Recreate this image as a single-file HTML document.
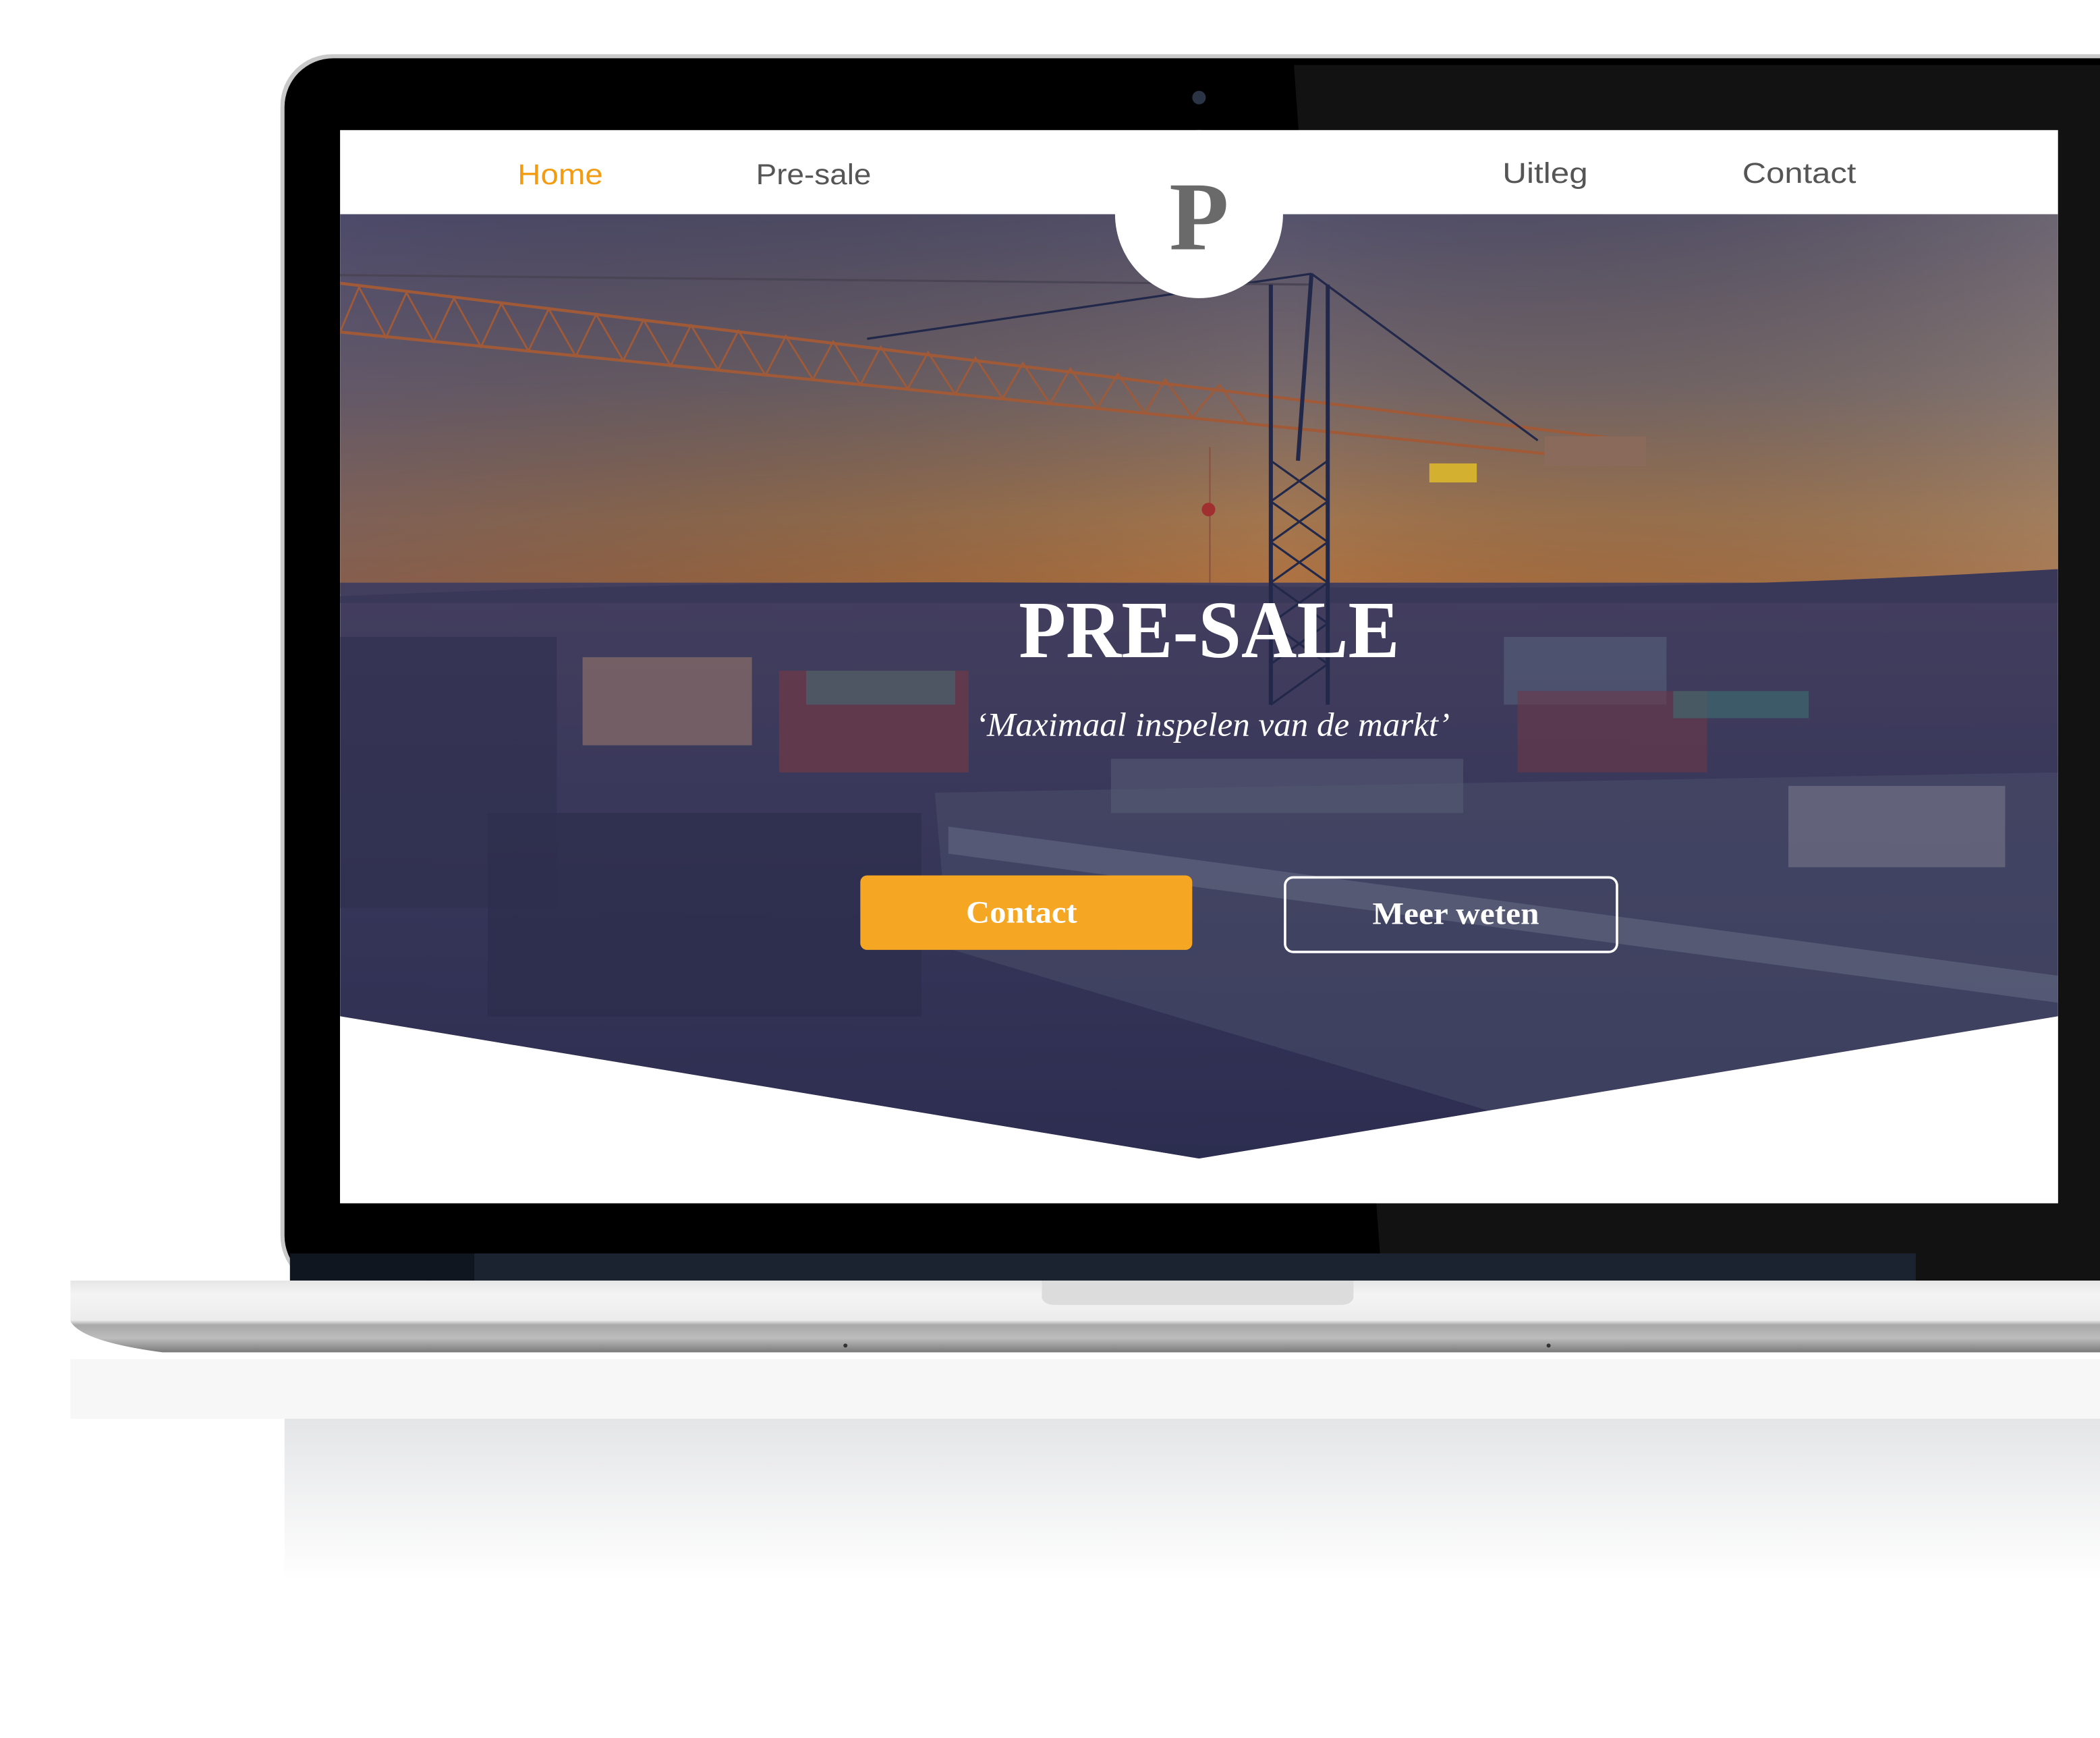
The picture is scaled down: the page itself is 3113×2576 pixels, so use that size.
<!DOCTYPE html>
<html><head><meta charset="utf-8"><style>
html,body{margin:0;padding:0;background:#fff;}
body{width:3113px;height:2576px;overflow:hidden;}
svg{display:block}
</style></head><body>
<svg width="3113" height="2576" viewBox="0 0 1550 1282.6" xmlns="http://www.w3.org/2000/svg">
<defs>
<linearGradient id="sky" x1="0" y1="0" x2="0" y2="1">
<stop offset="0" stop-color="#55526c"/>
<stop offset="0.45" stop-color="#76686a"/>
<stop offset="0.8" stop-color="#a2764f"/>
<stop offset="1" stop-color="#b0713f"/>
</linearGradient>
<linearGradient id="skyR" x1="0" y1="0" x2="1" y2="0">
<stop offset="0" stop-color="#3c3a66" stop-opacity="0.35"/>
<stop offset="0.55" stop-color="#000" stop-opacity="0"/>
<stop offset="1" stop-color="#a09080" stop-opacity="0.3"/>
</linearGradient>
<linearGradient id="city" x1="0" y1="0" x2="0" y2="1">
<stop offset="0" stop-color="#433e5e"/>
<stop offset="0.5" stop-color="#363659"/>
<stop offset="1" stop-color="#2c2d50"/>
</linearGradient>
<linearGradient id="base" x1="0" y1="0" x2="0" y2="1">
<stop offset="0" stop-color="#e6e6e6"/>
<stop offset="0.2" stop-color="#f4f4f4"/>
<stop offset="0.55" stop-color="#ececec"/>
<stop offset="0.62" stop-color="#a8a8a8"/>
<stop offset="0.8" stop-color="#bdbdbd"/>
<stop offset="1" stop-color="#7a7a7a"/>
</linearGradient>
<linearGradient id="refl" x1="0" y1="0" x2="0" y2="1">
<stop offset="0" stop-color="#e4e5e7"/>
<stop offset="1" stop-color="#ffffff"/>
</linearGradient>
<clipPath id="v"><polygon points="251,158 1519,158 1519,750 885,855 251,750"/></clipPath>
</defs>

<rect x="52" y="1003" width="1498" height="44" fill="#f7f7f7"/>
<rect x="210" y="1047" width="1340" height="120" fill="url(#refl)"/>

<rect x="207" y="40" width="1400" height="910" rx="38" fill="#c9c9c9"/>
<rect x="210" y="43" width="1400" height="905" rx="36" fill="#000"/>
<polygon points="955,48 1550,48 1550,945 1020,945" fill="#121212"/>
<rect x="350" y="925" width="1064" height="22" fill="#1b2330"/>
<rect x="214" y="925" width="136" height="22" fill="#0f1620"/>
<circle cx="885" cy="72" r="5" fill="#2a3444"/>

<rect x="251" y="96" width="1268" height="792" fill="#fff"/>
<g clip-path="url(#v)">
<rect x="251" y="158" width="1268" height="280" fill="url(#sky)"/>
<rect x="251" y="158" width="1268" height="280" fill="url(#skyR)"/>
<rect x="251" y="430" width="1268" height="430" fill="url(#city)"/>
<path d="M251,440 Q600,425 900,432 T1519,420 L1519,445 L251,445Z" fill="#3a3858"/>
<rect x="430" y="485" width="125" height="65" fill="#8a6e6a" opacity="0.7"/>
<rect x="575" y="495" width="140" height="75" fill="#6e3a48" opacity="0.75"/>
<rect x="595" y="495" width="110" height="25" fill="#3f6a72" opacity="0.6"/>
<rect x="1110" y="470" width="120" height="50" fill="#56607a" opacity="0.6"/>
<rect x="1120" y="510" width="140" height="60" fill="#6a3848" opacity="0.6"/>
<rect x="1235" y="510" width="100" height="20" fill="#3e7070" opacity="0.6"/>
<polygon points="690,585 1519,570 1519,750 1100,820 700,700" fill="#4a4f6a" opacity="0.55"/>
<polygon points="700,610 1519,720 1519,740 700,630" fill="#6a7088" opacity="0.5"/>
<rect x="820" y="560" width="260" height="40" fill="#5c6078" opacity="0.5"/>
<rect x="1320" y="580" width="160" height="60" fill="#8a8a98" opacity="0.45"/>
<rect x="360" y="600" width="320" height="150" fill="#2c2c4a" opacity="0.6"/>
<rect x="251" y="470" width="160" height="200" fill="#2f2f4e" opacity="0.6"/>
<g stroke="#a05a38" stroke-width="2.2" fill="none">
<line x1="251" y1="209" x2="1212" y2="326"/>
<line x1="251" y1="245" x2="1212" y2="342"/>
<polyline points="251,245 265,212 285,249 300,216 320,252 335,220 355,256 370,224 390,259 405,228 425,263 440,232 460,266 475,236 495,270 510,240 530,273 545,244 565,277 580,248 600,280 615,252 635,284 650,256 670,287 685,260 705,291 720,264 740,294 755,268 775,298 790,272 810,301 825,276 845,305 860,280 880,308 900,284 920,312" stroke-width="1.4"/>
</g>
<g stroke="#22284a" stroke-width="1.6" fill="none">
<line x1="968" y1="202" x2="1135" y2="325"/>
<line x1="968" y1="202" x2="640" y2="250"/>
<line x1="251" y1="203" x2="968" y2="210" stroke="#4a4555"/>
<line x1="938" y1="210" x2="938" y2="520" stroke-width="3"/>
<line x1="980" y1="210" x2="980" y2="520" stroke-width="3"/>
<polyline points="938,340 980,370 938,400 980,430 938,460 980,490 938,520"/>
<polyline points="980,340 938,370 980,400 938,430 980,460 938,490"/>
<line x1="968" y1="202" x2="958" y2="340" stroke-width="3"/>
<line x1="893" y1="330" x2="893" y2="430" stroke="#8a5040" stroke-width="1"/>
</g>
<rect x="1140" y="322" width="75" height="22" fill="#8a6a5a"/>
<rect x="1055" y="342" width="35" height="14" fill="#d4b030"/>
<circle cx="892" cy="376" r="5" fill="#a03030"/>
<polygon points="251,750 885,855 1519,750 1519,770 885,870 251,770" fill="#b55a30" opacity="0.7"/>
</g>
<polygon points="251,750 885,855 1519,750 1519,888 251,888" fill="#fff"/>

<circle cx="885" cy="158" r="62" fill="#fff"/>
<text x="885" y="184" text-anchor="middle" font-family="Liberation Serif, serif" font-weight="bold" font-size="72" fill="#6a6a6a">P</text>
<g font-family="Liberation Sans, sans-serif" font-size="21" fill="#555">
<text x="382" y="136" fill="#f39c12" textLength="63" lengthAdjust="spacingAndGlyphs">Home</text>
<text x="558" y="136" textLength="85" lengthAdjust="spacingAndGlyphs">Pre-sale</text>
<text x="1109" y="135" textLength="63" lengthAdjust="spacingAndGlyphs">Uitleg</text>
<text x="1286" y="135" textLength="84" lengthAdjust="spacingAndGlyphs">Contact</text>
</g>

<text x="752" y="485" font-family="Liberation Serif, serif" font-weight="bold" font-size="60" fill="#fff" textLength="281" lengthAdjust="spacingAndGlyphs">PRE-SALE</text>
<text x="720" y="543" font-family="Liberation Serif, serif" font-style="italic" font-size="25" fill="#fff" textLength="350" lengthAdjust="spacingAndGlyphs">‘Maximaal inspelen van de markt’</text>
<rect x="635" y="646" width="245" height="55" rx="5" fill="#f5a623"/>
<text x="713" y="681" font-family="Liberation Serif, serif" font-weight="bold" font-size="23" fill="#fff" textLength="82" lengthAdjust="spacingAndGlyphs">Contact</text>
<rect x="948.5" y="647.5" width="245" height="55" rx="6" fill="none" stroke="#fff" stroke-width="1.8"/>
<text x="1013" y="682" font-family="Liberation Serif, serif" font-weight="bold" font-size="23" fill="#fff" textLength="123" lengthAdjust="spacingAndGlyphs">Meer weten</text>

<path d="M52,945 L1550,945 L1550,998 L120,998 Q60,990 52,975 Z" fill="url(#base)"/>
<path d="M769,945 L999,945 L999,958 Q997,963 990,963 L778,963 Q771,963 769,958Z" fill="#dcdcdc"/>
<circle cx="624" cy="993" r="1.5" fill="#333"/>
<circle cx="1143" cy="993" r="1.5" fill="#333"/>
</svg>
</body></html>
